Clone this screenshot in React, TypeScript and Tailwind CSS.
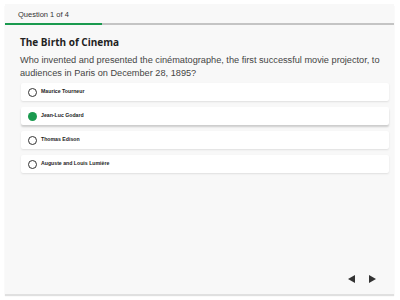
export default function App() {
  const options = [
    { label: "Maurice Tourneur", selected: false },
    { label: "Jean-Luc Godard", selected: true },
    { label: "Thomas Edison", selected: false },
    { label: "Auguste and Louis Lumière", selected: false },
  ];

  return (
    <div className="w-[400px] h-[300px] bg-white pt-[4px] px-[5px]" style={{ fontFamily: '"Liberation Sans", Arial, sans-serif' }}>
      <div className="w-[389px] h-[290px] bg-[#f8f8f8] shadow-[0_2px_1px_rgba(0,0,0,0.12)] flex flex-col">
        <div className="h-[19px] flex items-center pl-[13px] pt-[3px] text-[7.5px] text-[#333]">Question 1 of 4</div>
        <div className="h-[2px] bg-[#c4c4c4] flex">
          <div className="w-[97px] bg-[#1a9a4f]" />
        </div>

        <div className="pl-[15px] pr-[5px] flex flex-col flex-1">
          <h1 className="mt-[10px] text-[10px] font-bold text-[#222] leading-[14px]" style={{ fontFamily: '"Open Sans", sans-serif' }}>
            The Birth of Cinema
          </h1>
          <p className="mt-[5px] text-[9.2px] leading-[13px] text-[#444]">
            Who invented and presented the cinématographe, the first successful movie projector, to audiences in Paris on December 28, 1895?
          </p>

          <div className="mt-[3px] ml-[1px] flex flex-col gap-[6px]">
            {options.map((o) => (
              <div
                key={o.label}
                className={
                  o.selected
                    ? "h-[18px] bg-white rounded-[2px] flex items-center pl-[7px] shadow-[0_2px_2px_rgba(0,0,0,0.18)]"
                    : "h-[18px] bg-white rounded-[2px] flex items-center pl-[7px] shadow-[0_1px_2px_rgba(0,0,0,0.1)]"
                }
              >
                {o.selected ? (
                  <span className="w-[9px] h-[9px] rounded-full bg-[#1a9a4f]" />
                ) : (
                  <span className="w-[9px] h-[9px] rounded-full border-[1.5px] border-[#333]" />
                )}
                <span className="ml-[4px] text-[5.2px] font-bold text-[#222]">{o.label}</span>
              </div>
            ))}
          </div>

          <div className="mt-auto mb-[11px] flex justify-end gap-[14px] pr-[13px]">
            <svg width="7" height="8" viewBox="0 0 7 8"><path d="M7 0 L0 4 L7 8 Z" fill="#333" /></svg>
            <svg width="7" height="8" viewBox="0 0 7 8"><path d="M0 0 L7 4 L0 8 Z" fill="#333" /></svg>
          </div>
        </div>
      </div>
    </div>
  );
}
